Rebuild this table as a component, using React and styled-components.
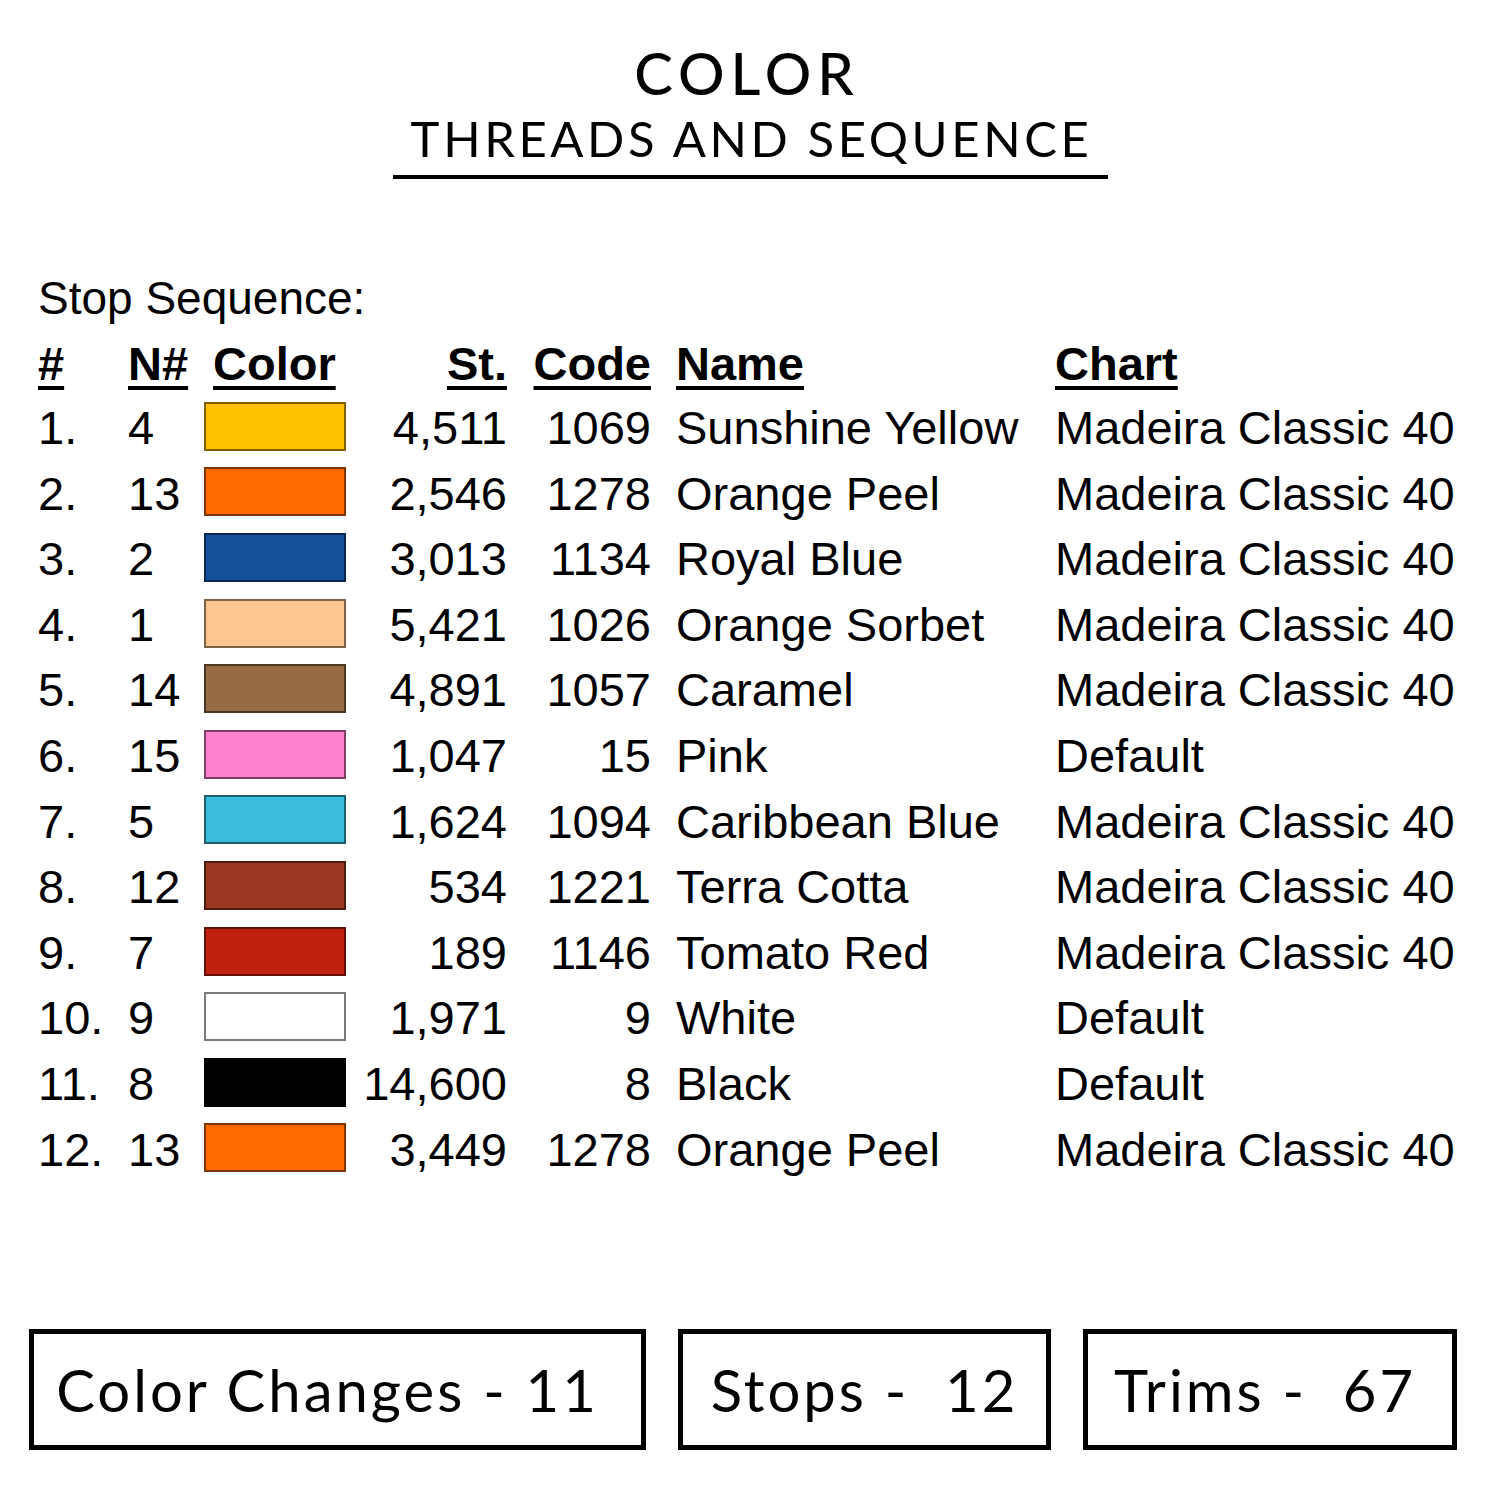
import React from 'react';
import styled, { createGlobalStyle } from 'styled-components';

const GlobalStyle = createGlobalStyle`
  html, body {
    margin: 0;
    padding: 0;
    background: #ffffff;
  }
  body {
    font-family: "Liberation Sans", Arial, sans-serif;
    color: #000;
  }
`;

const Page = styled.div`
  width: 1500px;
  height: 1500px;
  background: #fff;
  overflow: hidden;
`;

const Header = styled.header`
  display: flex;
  flex-direction: column;
  align-items: center;
  padding-top: 44px;
`;

const Title = styled.h1`
  margin: 0 0 0 -6px;
  font-family: Lato, "Open Sans", sans-serif;
  font-weight: 500;
  font-size: 58px;
  line-height: 58px;
  letter-spacing: 6px;
`;

const Subtitle = styled.h2`
  margin: 12px 0 0;
  width: 715px;
  padding-bottom: 12px;
  border-bottom: 4px solid #000;
  text-align: center;
  font-family: Lato, "Open Sans", sans-serif;
  font-weight: 400;
  font-size: 49px;
  line-height: 49px;
  letter-spacing: 3.6px;
  text-indent: 3px;
`;

const Label = styled.div`
  margin: 96px 0 0 38px;
  font-size: 46px;
  line-height: 46px;
`;

const Table = styled.div`
  display: grid;
  grid-template-columns: 90px 76px 142px 161px 144px 404px auto;
  grid-template-rows: 63px;
  grid-auto-rows: 65.6px;
  margin: 11px 0 0 38px;
  font-size: 47px;
  line-height: 65.6px;
  align-items: center;
`;

const Cell = styled.div`
  white-space: nowrap;
  text-align: ${(p) => (p.$right ? 'right' : 'left')};
  padding-left: ${(p) => (p.$indent ? '25px' : '0')};
`;

const Head = styled(Cell)`
  font-weight: 700;
  text-decoration: underline;
  text-decoration-thickness: 4px;
  text-underline-offset: 6px;
  padding-left: ${(p) => (p.$indent ? `${p.$indent}px` : '0')};
`;

const Swatch = styled.div`
  width: 142px;
  height: 49px;
  box-sizing: border-box;
  background: ${(p) => p.$color};
  border: 2px solid ${(p) => (p.$color === '#ffffff' ? '#7a7a7a' : 'rgba(0,0,0,0.5)')};
  margin-top: -3px;
`;

const Footer = styled.div`
  display: flex;
  gap: 32px;
  margin: 147px 0 0 29px;
`;

const Box = styled.div`
  box-sizing: border-box;
  width: ${(p) => p.$w}px;
  height: 121px;
  border: 5px solid #000;
  display: flex;
  align-items: center;
  justify-content: center;
  padding-right: ${(p) => p.$shift || 0}px;
  font-family: Lato, "Open Sans", sans-serif;
  font-size: 58px;
  white-space: pre;
  letter-spacing: 3px;
`;

const rows = [
  ['1.', '4', '#ffc000', '4,511', '1069', 'Sunshine Yellow', 'Madeira Classic 40'],
  ['2.', '13', '#ff6a00', '2,546', '1278', 'Orange Peel', 'Madeira Classic 40'],
  ['3.', '2', '#134f9a', '3,013', '1134', 'Royal Blue', 'Madeira Classic 40'],
  ['4.', '1', '#fbc690', '5,421', '1026', 'Orange Sorbet', 'Madeira Classic 40'],
  ['5.', '14', '#976c45', '4,891', '1057', 'Caramel', 'Madeira Classic 40'],
  ['6.', '15', '#ff80cc', '1,047', '15', 'Pink', 'Default'],
  ['7.', '5', '#3abcdc', '1,624', '1094', 'Caribbean Blue', 'Madeira Classic 40'],
  ['8.', '12', '#9b3822', '534', '1221', 'Terra Cotta', 'Madeira Classic 40'],
  ['9.', '7', '#c0200e', '189', '1146', 'Tomato Red', 'Madeira Classic 40'],
  ['10.', '9', '#ffffff', '1,971', '9', 'White', 'Default'],
  ['11.', '8', '#000000', '14,600', '8', 'Black', 'Default'],
  ['12.', '13', '#ff6a00', '3,449', '1278', 'Orange Peel', 'Madeira Classic 40'],
];

export default function App() {
  return (
    <Page>
      <GlobalStyle />
      <Header>
        <Title>COLOR</Title>
        <Subtitle>THREADS AND SEQUENCE</Subtitle>
      </Header>

      <Label>Stop Sequence:</Label>

      <Table>
        <Head>#</Head>
        <Head>N#</Head>
        <Head $indent={9}>Color</Head>
        <Head $right>St.</Head>
        <Head $right>Code</Head>
        <Head $indent={25}>Name</Head>
        <Head>Chart</Head>
        {rows.map((r) => (
          <React.Fragment key={r[0]}>
            <Cell>{r[0]}</Cell>
            <Cell>{r[1]}</Cell>
            <Swatch $color={r[2]} />
            <Cell $right>{r[3]}</Cell>
            <Cell $right>{r[4]}</Cell>
            <Cell $indent>{r[5]}</Cell>
            <Cell>{r[6]}</Cell>
          </React.Fragment>
        ))}
      </Table>

      <Footer>
        <Box $w={617} $shift={20}>Color Changes - 11</Box>
        <Box $w={373}>{'Stops -  12'}</Box>
        <Box $w={374} $shift={10}>{'Trims -  67'}</Box>
      </Footer>
    </Page>
  );
}
